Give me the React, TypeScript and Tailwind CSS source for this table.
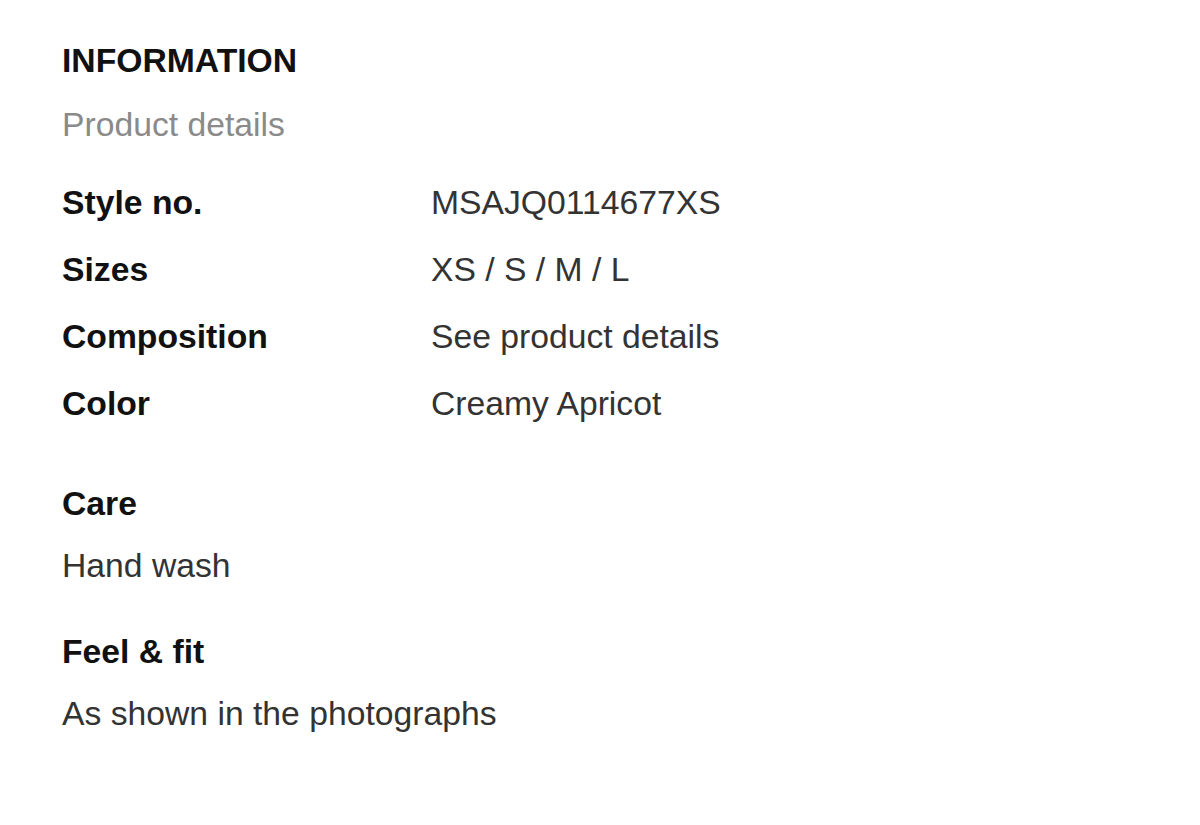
const details = [
  { label: "Style no.", value: "MSAJQ0114677XS" },
  { label: "Sizes", value: "XS / S / M / L" },
  { label: "Composition", value: "See product details" },
  { label: "Color", value: "Creamy Apricot" },
];

const notes = [
  { title: "Care", text: "Hand wash" },
  { title: "Feel & fit", text: "As shown in the photographs" },
];

export default function App() {
  return (
    <div className="min-h-[825px] w-full bg-white pl-[62px] pt-[35px] font-[family-name:'Liberation_Sans',Arial,sans-serif] text-[33.7px] leading-[50px]">
      <h2 className="font-bold text-[#111111]">INFORMATION</h2>
      <p className="mt-[14px] text-[#8a8a8a]">Product details</p>

      <div className="mt-[20px] flex flex-col">
        {details.map((row) => (
          <div key={row.label} className="grid grid-cols-[369px_1fr] leading-[67px]">
            <span className="font-bold text-[#111111]">{row.label}</span>
            <span className="text-[#333333]">{row.value}</span>
          </div>
        ))}
      </div>

      {notes.map((note, i) => (
        <div key={note.title} className={i === 0 ? "mt-[41px]" : "mt-[36px]"}>
          <h3 className="font-bold text-[#111111]">{note.title}</h3>
          <p className="mt-[12px] text-[#333333]">{note.text}</p>
        </div>
      ))}
    </div>
  );
}
